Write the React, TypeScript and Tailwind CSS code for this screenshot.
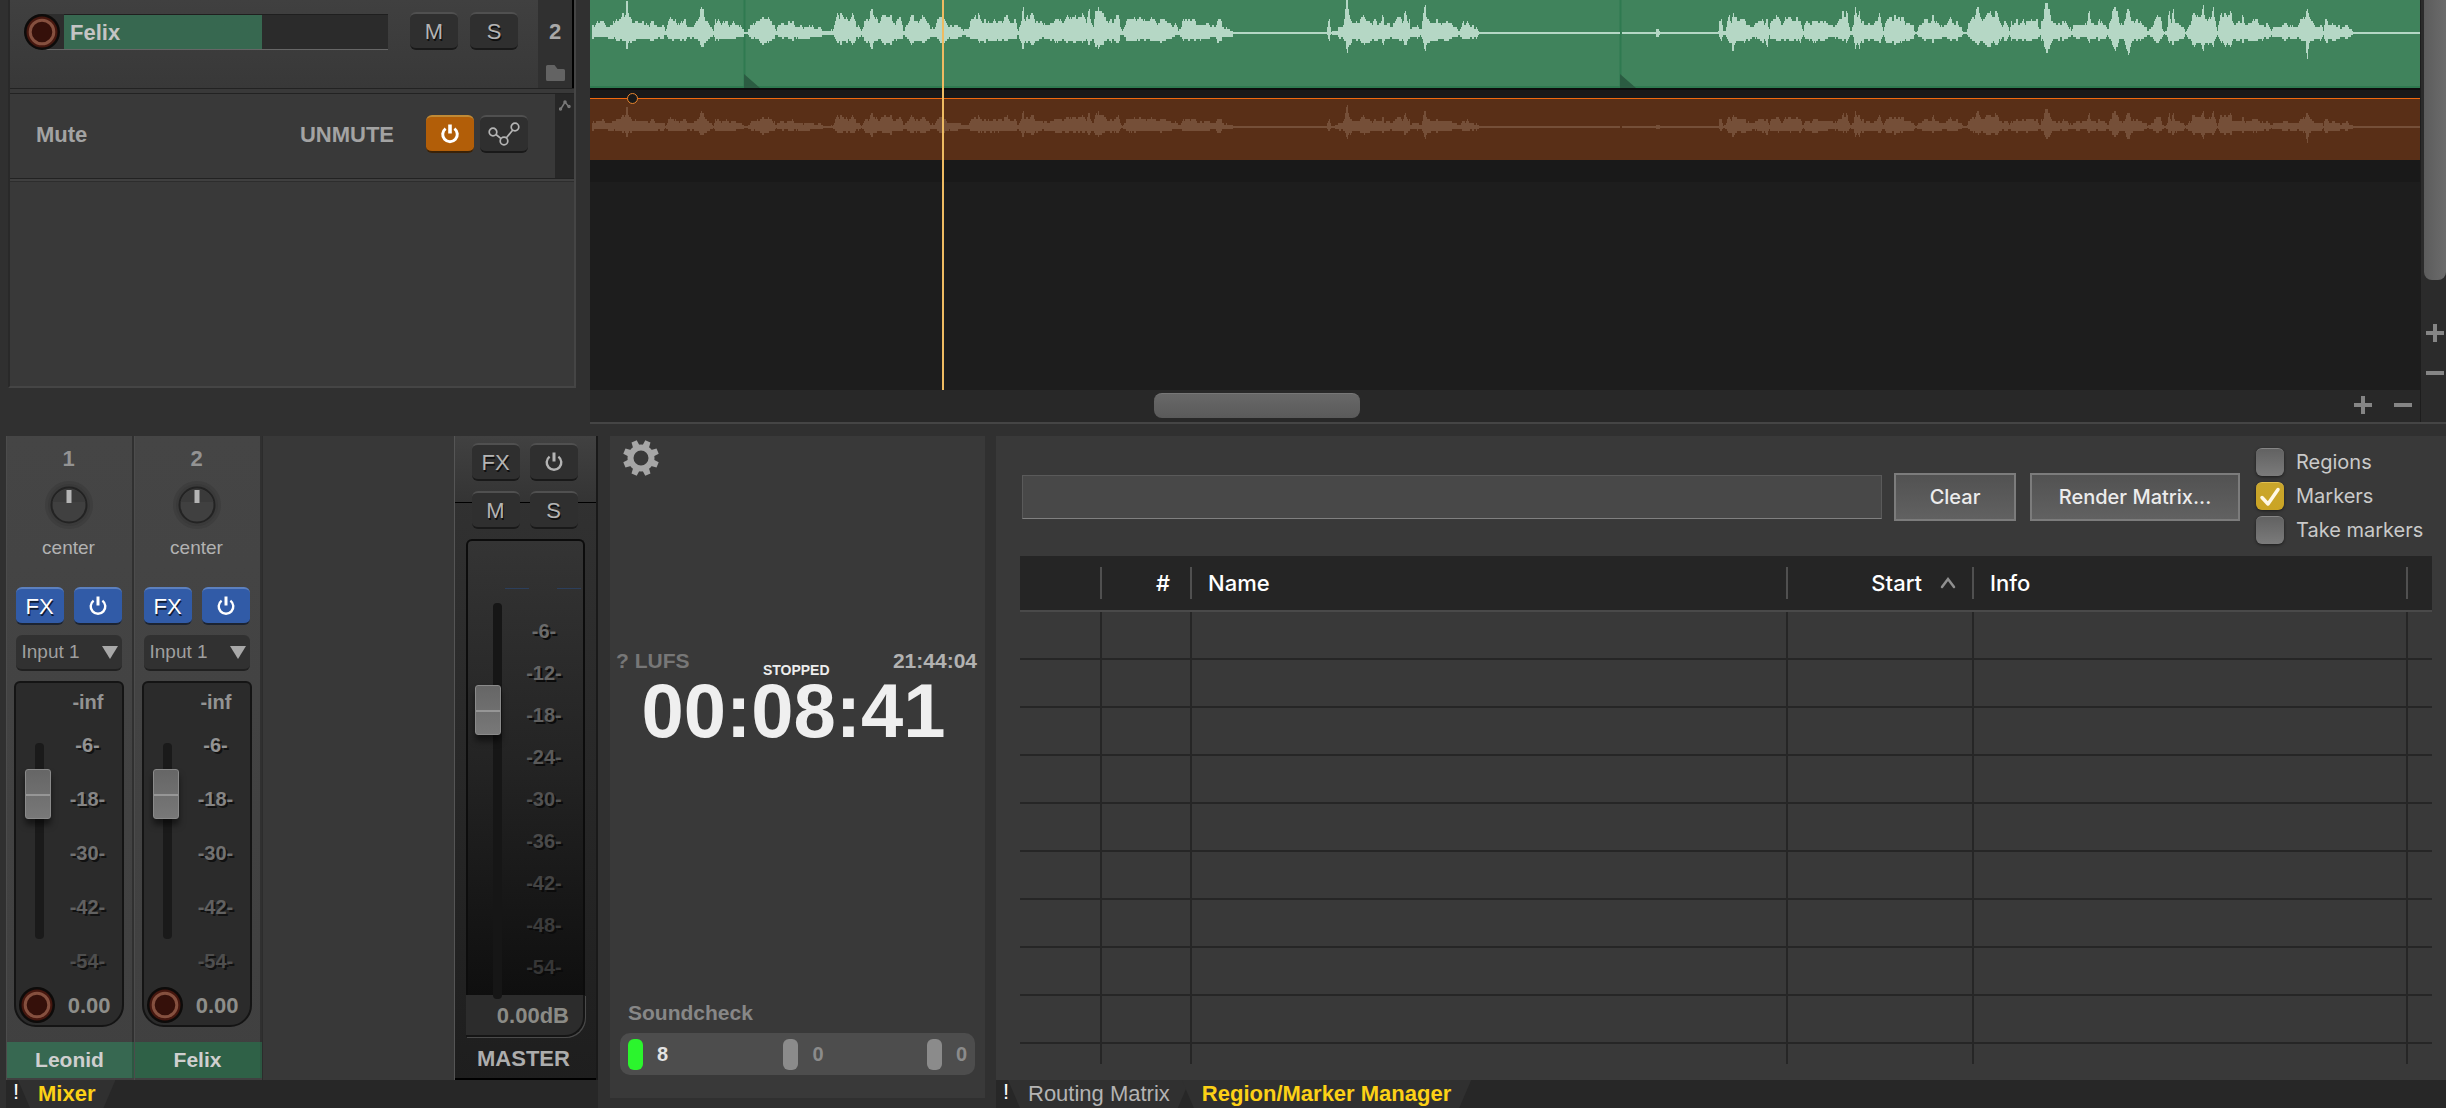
import type { ReactNode } from "react";

const sans = "font-['Liberation_Sans',Arial,sans-serif]";
const ui = "font-[Inter,'Noto_Sans',sans-serif]";

/* ---------- Waveform data: "position,top,bottom" breakpoints per passage ---------- */

type Passage = { start: number; scale: number; peaks: string };

const AXIS = 99;

const passages: Passage[] = [
  {
    start: -10,
    scale: 1.96,
    peaks:
      "24,80,112 35,66,112 48,66,112 50,80,114 62,80,114 68,60,116 72,72,118 80,55,118 88,48,122 91,0,150 95,45,125 103,75,120 108,66,118 130,66,118 135,80,114 142,66,118 150,80,115 163,80,112 167,96,102 171,72,115 177,54,118 182,72,116 186,60,116 194,80,116 205,54,122 210,80,115 222,80,115 230,62,118 240,24,142 244,55,130 250,66,122 258,84,110 261,96,102 264,66,118 270,50,125 276,72,118 287,60,118 292,78,118 300,66,118 315,80,112 320,84,110 321,97,101 328,96,102 330,84,110 345,62,118 358,54,136 364,54,128 370,66,118 380,72,116 383,96,102 388,80,110 396,74,112 410,66,118 425,78,116 440,85,115 455,80,112 472,84,110 476,95,102 490,96,102 492,84,102 494,96,102 497,84,108 500,70,112 503,24,138 508,45,130 515,45,125 524,66,120 533,48,128 540,72,118 548,84,110 551,95,103 556,72,118 565,60,128 570,24,150 575,60,122 588,66,116 592,54,125 612,55,128 618,70,118 625,54,116 630,72,115 634,96,102 640,72,115 652,48,130 660,66,122 670,54,125 678,66,120 685,80,115 695,90,108 700,60,112 704,54,124 714,54,128 718,80,115 745,80,112 750,92,106 760,84,110 768,55,116 778,48,118 785,66,122 798,62,122 805,72,122 810,54,125 816,72,120 825,66,118 838,54,118 843,68,116 853,66,116 858,96,102 862,72,125 868,36,138 873,60,125 880,54,125 887,42,135 893,70,122 905,66,116 915,80,116 928,68,118 935,54,128 945,68,120 955,50,128 962,62,118 971,48,128 984,50,122 992,72,116 997,24,138 1000,70,118 1006,80,118 1012,12,150 1017,50,130 1028,48,125 1035,66,120 1042,60,125 1050,60,120 1055,54,122 1059,85,105 1062,96,102 1070,66,118 1080,54,125 1090,58,122 1098,55,118 1108,68,118 1122,48,125 1130,72,122 1145,58,122 1155,72,118 1163,85,108 1166,72,108 1172,92,106 1178,80,110 1186,48,122 1192,66,118 1200,54,118 1210,80,118 1225,72,116 1235,80,112 1245,80,112 1249,60,130 1255,66,118 1262,85,112 1278,92,108 1279,97,101 1411,97,101",
  },
  {
    start: 710,
    scale: 2.613,
    peaks:
      "0,97,101 68,97,101 75,60,120 80,97,101 96,92,106 101,78,116 106,88,110 111,80,112 115,60,122 118,25,125 122,6,150 126,36,135 132,72,125 136,60,120 152,66,122 158,66,120 164,36,132 168,66,125 180,68,122 188,72,118 195,48,125 202,72,122 210,66,118 216,48,132 220,80,118 232,72,112 240,82,112 250,60,116 258,48,120 265,66,122 274,42,132 280,72,120 285,60,116 288,90,108 293,80,112 300,85,110 308,80,112 315,92,106 320,66,118 323,36,132 326,24,150 330,60,130 345,72,122 362,60,120 370,74,118 395,72,116 410,82,112 414,96,102 418,85,110 425,66,114 430,80,115 437,66,115 442,80,114 460,84,112 465,92,106 466,97,101 835,97,101 836,99,99 840,99,99 841,97,101 928,97,101 930,85,108 933,84,114 938,92,106 941,97,101 1092,97,101 1096,60,115 1100,54,125 1104,96,102 1112,90,106 1117,48,125 1121,42,130 1126,66,136 1131,54,143 1138,48,128 1145,66,120 1156,55,125 1165,72,120 1172,78,118 1183,84,112 1192,62,116 1205,60,122 1212,72,120 1220,60,137 1224,96,102 1228,72,112 1240,54,118 1250,58,120 1258,84,112 1268,60,118 1277,48,122 1284,62,120 1300,62,118 1306,60,130 1312,85,108 1314,96,102 1318,66,115 1335,74,120 1350,66,122 1375,68,118 1390,66,116 1395,80,112 1405,62,118 1415,50,118 1428,42,122 1433,80,112 1438,96,102 1445,80,110 1450,36,137 1455,66,120 1460,36,143 1465,66,125 1480,72,118 1500,74,120 1508,60,120 1513,36,132 1518,72,116 1522,84,110 1524,96,102 1530,66,125 1540,55,125 1555,54,130 1568,66,120",
  },
  {
    start: 1290,
    scale: 2.77,
    peaks:
      "55,60,130 63,48,122 68,74,118 92,80,115 95,97,101 102,97,101 103,84,110 115,72,115 130,60,118 138,68,118 147,54,122 155,66,118 165,82,112 175,80,112 192,60,118 200,72,118 212,68,118 225,84,110 228,97,101 240,97,101 243,66,110 250,66,116 255,55,122 262,54,125 268,12,135 274,48,125 282,72,116 290,55,128 301,30,150 306,55,125 315,60,120 323,24,143 328,66,118 336,80,114 345,68,118 355,84,112 358,96,102 362,72,118 375,66,120 388,72,118 397,60,120 405,70,120 420,66,118 435,66,116 440,85,110 442,96,102 446,66,118 452,50,130 457,18,145 463,26,150 468,26,150 473,60,130 478,72,118 500,74,116 513,66,118 520,80,116 528,84,110 530,96,102 534,80,112 550,78,112 572,70,114 578,24,130 583,70,116 600,74,114 612,60,120 620,74,118 628,85,110 630,96,102 634,66,118 645,40,130 652,36,143 658,36,138 663,72,120 676,66,122 684,36,150 690,48,148 695,72,122 705,66,118 714,60,120 725,72,118 737,84,110 740,97,101 746,88,108 755,72,116 768,48,130 775,48,120 783,92,106 786,97,101 794,92,105 796,60,120 800,30,132 806,66,125 811,42,130 818,72,120 830,80,114 842,84,112 845,97,101 850,88,108 858,72,120 866,36,137 872,60,125 880,46,130 888,50,130 894,18,155 899,54,130 908,66,125 915,60,124 922,36,132 928,60,120 932,90,106 934,96,102 938,54,118 945,50,124 955,42,136 962,50,130 970,48,130 978,66,122 990,68,122 998,66,122 1004,54,125 1012,72,118 1028,72,118 1038,54,125 1048,66,120 1060,80,116 1070,72,116 1080,84,112 1082,97,101 1088,80,112 1105,84,112 1125,72,118 1140,80,114 1155,84,112 1162,60,118 1172,54,125 1178,45,130 1182,24,180 1187,54,128 1195,66,120 1205,80,118 1218,80,116 1225,84,110 1227,96,102 1232,48,130 1238,66,125 1250,72,122 1265,80,116 1285,84,110 1289,76,114 1293,72,118 1300,84,110 1308,92,106 1309,97,101 1496,97,101",
  },
];

const points = passages.flatMap(({ start, scale, peaks }) =>
  peaks.split(" ").map((p) => {
    const [x, top, bottom] = p.split(",").map(Number);
    return { x: start + x / scale, up: (AXIS - top) / 3, down: (bottom - AXIS) / 3 };
  }),
);

/* Deterministic sample-to-sample variation, 0..1 */
function grain(n: number) {
  const s = Math.sin(n * 12.9898) * 43758.5453;
  return s - Math.floor(s);
}

function envelope(centre: number, gain: number) {
  const upper: string[] = [];
  const lower: string[] = [];
  let i = 0;
  for (let x = 2; x < 1830; x += 1) {
    while (i < points.length - 2 && points[i + 1].x <= x) i += 1;
    const a = points[i];
    const b = points[i + 1];
    const t = Math.min(1, Math.max(0, (x - a.x) / (b.x - a.x || 1)));
    const rough = 0.8 + 0.5 * grain(Math.floor(x / 2));
    const snap = (v: number) => (v < 0.2 ? 0 : Math.max(1, Math.round((v * gain * (v > 4 ? rough : 1)) / 2) * 2));
    const up = snap(a.up + (b.up - a.up) * t);
    const down = snap(a.down + (b.down - a.down) * t);
    upper.push(`${x} ${centre - up}L${x + 1} ${centre - up}`);
    lower.unshift(`${x + 1} ${centre + down}L${x} ${centre + down}`);
  }
  return `M${upper.join("L")}L${lower.join("L")}Z`;
}

const loudPath = envelope(33, 1);
const quietPath = envelope(28, 0.6);

/* ---------- Small parts ---------- */

function PowerIcon({ size = 22, bold = false }: { size?: number; bold?: boolean }) {
  return (
    <svg width={size} height={size} viewBox="0 0 22 22" fill="none" stroke="currentColor" strokeWidth={bold ? 3 : 2.4} aria-hidden="true">
      <path d="M6.6 5.6a7.3 7.3 0 1 0 8.8 0" />
      <path d="M11 1.5v9" strokeWidth={bold ? 3.6 : 3} />
    </svg>
  );
}

function RecordIcon({ size }: { size: number }) {
  return (
    <svg width={size} height={size} viewBox="0 0 36 36" aria-hidden="true">
      <circle cx="18" cy="18" r="18" fill="#0d0b0a" />
      <circle cx="18" cy="18" r="15.5" fill="#45170f" />
      <circle cx="18" cy="18" r="11.8" fill="#35100a" stroke="#85503f" strokeWidth="3" />
    </svg>
  );
}

function KeyButton({ label, children, tone = "dark", size = "w-12" }: { label: string; children: ReactNode; tone?: "dark" | "blue" | "orange"; size?: string }) {
  const tones = {
    dark: "bg-[#2f2f2f] border-t-[#505050] border-b-[#191919] text-[#b4b4b4]",
    blue: "bg-[#315ba7] border-t-[#5c80bf] border-b-[#1c2432] text-white",
    orange: "bg-[#b25e08] border-t-[#c08a35] border-b-[#3a2208] text-white",
  };
  return (
    <button
      type="button"
      aria-label={label}
      className={`flex h-[38px] shrink-0 items-center justify-center rounded-md border-t-2 border-b-2 text-[22px] [text-shadow:1px_2px_0_rgba(0,0,0,0.7)] ${size} ${tones[tone]}`}
    >
      {children}
    </button>
  );
}

function Knob({ label }: { label: string }) {
  return (
    <label className="relative flex h-12 w-12 items-center justify-center">
      <svg width="48" height="48" viewBox="0 0 48 48" aria-hidden="true">
        <circle cx="24" cy="24" r="24" fill="#3e3e3e" />
        <circle cx="24" cy="24" r="21" fill="#3a3a3a" />
        <circle cx="24" cy="24" r="17.5" fill="#404040" stroke="#232323" strokeWidth="2" />
        <path d="M7.5 21a17 17 0 0 1 33 0z" fill="#3a3a3a" />
        <rect x="21.500" y="9" width="5" height="13" fill="#b4b4b4" />
      </svg>
      <input type="range" min={-100} max={100} defaultValue={0} aria-label={label} className="absolute inset-0 h-full w-full opacity-0" />
    </label>
  );
}

function FaderCap() {
  return (
    <span className="block h-[50px] w-[26px] rounded-[3px] border border-[#8a8a8a] bg-linear-to-b from-[#666] to-[#787878] shadow-[0_6px_6px_rgba(0,0,0,0.5)]">
      <span className="mt-[24px] block h-0.5 bg-[#969696]" />
    </span>
  );
}

function Fader({ label, className, children }: { label: string; className: string; children: ReactNode }) {
  return (
    <label className={`relative block ${className}`}>
      {children}
      <input type="range" defaultValue={75} aria-label={label} className="absolute inset-0 h-full w-full opacity-0 [writing-mode:vertical-lr]" />
    </label>
  );
}

/* ---------- Track panel ---------- */

function TrackPanel() {
  return (
    <section aria-label="Track controls" className="w-[590px] shrink-0 pl-2">
      <div className="h-[388px] w-[568px] border-x-2 border-b-2 border-[#454545] border-l-[#292929] bg-[#393939]">
        <div className="flex h-[89px] border-b border-[#222] bg-linear-to-b from-[#404040] to-[#383838]">
          <div className="flex flex-1 items-start pt-3 pl-[14px]">
            <div className="mt-0.5 flex h-9 w-[364px] rounded-l-full border-b border-[#666] bg-[#2d2d2d]">
              <button type="button" aria-label="Record arm Felix">
                <RecordIcon size={36} />
              </button>
              <input
                aria-label="Track name"
                defaultValue="Felix"
                className="ml-1 w-full min-w-0 border-t border-[#1f1f1f] bg-linear-to-r from-[#376850] from-61% to-[#2b2b2b] to-61% pl-[6px] text-[22px] font-bold text-[#c4c4c4] outline-none"
              />
            </div>
            <div className="ml-[22px] flex gap-3">
              <KeyButton label="Mute">M</KeyButton>
              <KeyButton label="Solo">S</KeyButton>
            </div>
          </div>
          <div className="flex w-9 flex-col items-center border-r-2 border-black bg-[#303030] pt-5 text-[22px] leading-6 font-bold text-[#a8a8a8]">
            2
            <svg width="19" height="16" viewBox="0 0 19 16" className="mt-[21px]" aria-hidden="true">
              <path d="M0 1.500q0-1.500 1.500-1.500h7l3 4h6q1.500 0 1.500 1.500v9q0 1.500-1.500 1.500h-16q-1.500 0-1.500-1.500z" fill="#636363" />
            </svg>
          </div>
        </div>
        <div className="mt-1 flex h-[86px] border-y border-[#222]">
          <div className="flex flex-1 items-center pb-1 pl-[26px] text-[22px] font-bold text-[#a3a3a3]">
            <span>Mute</span>
            <span className="ml-auto">UNMUTE</span>
            <div className="mr-[27px] ml-8 flex gap-1.5">
              <KeyButton label="Bypass envelope" tone="orange">
                <PowerIcon size={22} bold />
              </KeyButton>
              <KeyButton label="Envelope options">
                <svg width="32" height="24" viewBox="0 0 32 24" fill="none" stroke="currentColor" strokeWidth="1.700" aria-hidden="true">
                  <circle cx="5" cy="10" r="3.800" />
                  <circle cx="16" cy="19" r="3.800" />
                  <circle cx="27" cy="5" r="3.800" />
                  <path d="M8 12.500l5 4.200M18.200 16l6.600-8" />
                </svg>
              </KeyButton>
            </div>
          </div>
          <div className="w-[19px] bg-[#272727] pt-1.5 pl-1">
            <svg width="12" height="11" viewBox="0 0 12 11" fill="none" stroke="#7a7a7a" strokeWidth="1.500" aria-hidden="true">
              <path d="M1.500 9.500L6 2l4 5" />
              <circle cx="1.500" cy="9" r="1" />
              <circle cx="6" cy="2" r="1" />
              <circle cx="10" cy="6.500" r="1" />
            </svg>
          </div>
        </div>
        <div className="h-[3px] border-b border-[#2d2d2d] bg-[#404040]" />
      </div>
    </section>
  );
}

/* ---------- Arrange view ---------- */

function ZoomButton({ kind, label }: { kind: "plus" | "minus"; label: string }) {
  return (
    <button type="button" aria-label={label} className="text-[#858585]">
      <svg width="20" height="20" viewBox="0 0 20 20" stroke="currentColor" strokeWidth="4" aria-hidden="true">
        <path d={kind === "plus" ? "M1 10h18M10 1v18" : "M1 10h18"} />
      </svg>
    </button>
  );
}

function Arrange() {
  return (
    <section aria-label="Arrange view" className="flex min-w-0 flex-1 border-b-2 border-[#454545]">
      <div className="flex min-w-0 flex-1 flex-col">
        <div className="relative h-[390px] overflow-hidden bg-[#1d1d1d]">
          <div className="h-[88px] border-b-2 border-[#2f7a50] bg-[#40835c]">
            <svg className="h-[88px] w-full" viewBox="0 0 1830 88" preserveAspectRatio="none" aria-label="Felix audio">
              <path d="M154.500 0v88M1030.500 0v88" stroke="#2f7a50" strokeWidth="2" />
              <path d={loudPath} fill="#b5d7c5" />
              <path d="M154 74l16 14h-16zM1030 74l16 14h-16z" fill="#2b5c42" />
            </svg>
          </div>
          <div className="h-[10px] border-t-2 border-[#0d0d0d] bg-[#191919]" />
          <div className="h-[62px] border-t border-[#f0690f] bg-[#592f17]">
            <svg className="h-[61px] w-full" viewBox="0 0 1830 61" preserveAspectRatio="none" aria-label="Felix mute envelope">
              <path d={quietPath} fill="#754f38" />
            </svg>
          </div>
          <div className="h-[22px] bg-[#191919]" />
          <span className="absolute top-[93px] left-[37px] h-[11px] w-[11px] rounded-full border border-[#e8862f] bg-[#191919]" />
          <span className="absolute inset-y-0 left-[352px] w-[2px] bg-[#eebb62]" />
        </div>
        <div className="flex h-8 items-center bg-[#282828] pr-[7px] pb-0.5">
          <div className="flex-1">
            <div className="ml-[32%] h-[25px] w-[206px] rounded-lg border-t border-[#777] bg-linear-to-b from-[#686868] to-[#5a5a5a]" />
          </div>
          <div className="flex gap-5">
            <ZoomButton kind="plus" label="Zoom in horizontally" />
            <ZoomButton kind="minus" label="Zoom out horizontally" />
          </div>
        </div>
      </div>
      <div className="flex w-[26px] flex-col items-end border-l border-[#1d1d1d] bg-[#2b2b2b]">
        <div className="h-[280px] w-[22px] rounded-b-lg bg-linear-to-r from-[#5c5c5c] to-[#6b6b6b]" />
        <div className="mt-[43px] flex flex-col gap-5 pr-px">
          <ZoomButton kind="plus" label="Zoom in vertically" />
          <ZoomButton kind="minus" label="Zoom out vertically" />
        </div>
      </div>
    </section>
  );
}

/* ---------- Mixer ---------- */

const stripMarks = [
  { db: "-6-", tone: "text-[#939393]" },
  { db: "-18-", tone: "text-[#858585]" },
  { db: "-30-", tone: "text-[#727272]" },
  { db: "-42-", tone: "text-[#616161]" },
  { db: "-54-", tone: "text-[#4f4f4f]" },
];

function ChannelStrip({ number, name, bar }: { number: number; name: string; bar: string }) {
  return (
    <div className="flex w-32 flex-col border-l border-l-[#4c4c4c] bg-linear-to-b from-[#454545] to-[#404040]">
      <div className="flex h-[606px] flex-col items-center border-r-2 border-[#303030] pt-[11px] pr-0.5">
        <span className="text-[22px] leading-6 font-bold text-[#939393]">{number}</span>
        <div className="mt-[10px]">
          <Knob label={`Pan ${name}`} />
        </div>
        <span className="mt-[7px] text-[19px] leading-6 text-[#b2b2b2]">center</span>
        <div className="mt-[27px] flex gap-2.5">
          <KeyButton label={`Effects ${name}`} tone="blue">FX</KeyButton>
          <KeyButton label={`Effects power ${name}`} tone="blue">
            <PowerIcon />
          </KeyButton>
        </div>
        <div className="relative mt-[10px]">
          <select
            aria-label={`Input of ${name}`}
            className="h-9 w-[106px] appearance-none rounded-md border-b-2 border-[#202020] bg-[#313131] pl-1.5 text-[19px] text-[#9f9f9f]"
          >
            <option>Input 1</option>
          </select>
          <svg width="16" height="13" viewBox="0 0 16 13" className="pointer-events-none absolute top-[11px] right-1" aria-hidden="true">
            <path d="M0 0h16l-8 13z" fill="#a8a8a8" />
          </svg>
        </div>
        <div className="mt-[10px] flex h-[346px] w-[110px] flex-col rounded-t-md rounded-b-[22px] border-2 border-[#141414] bg-[#2b2b2b]">
          <div className="mt-[7px] pr-[18px] text-right text-xl leading-6 font-bold text-[#939393]">-inf</div>
          <div className="mt-0.5 flex h-[269px] justify-between">
            <Fader label={`Volume ${name}`} className="ml-[9px] h-full w-[26px]">
              <span className="absolute top-[27px] left-2.5 h-[196px] w-[9px] rounded-sm bg-[#1a1a1a]" />
              <span className="absolute top-[53px] left-0">
                <FaderCap />
              </span>
            </Fader>
            <ul className="mt-0.5 w-[68px] text-center text-xl font-bold">
              {stripMarks.map((m) => (
                <li key={m.db} className={`h-[54px] leading-[54px] [text-shadow:2px_2px_0_#111] ${m.tone}`}>
                  {m.db}
                </li>
              ))}
            </ul>
          </div>
          <div className="mt-0.5 flex items-center justify-between pr-[11px] pl-[3px]">
            <button type="button" aria-label={`Record arm ${name}`}>
              <RecordIcon size={36} />
            </button>
            <span className="text-[22px] font-bold text-[#8e8e8a]">0.00</span>
          </div>
        </div>
      </div>
      <div className={`flex h-9 items-center justify-center border-r-2 border-[#2c5842] text-[21px] font-bold text-[#cfcfcf] ${bar}`}>{name}</div>
      <div className="h-0.5" />
    </div>
  );
}

const masterMarks = [
  { db: "-6-", tone: "text-[#6b6b6b]" },
  { db: "-12-", tone: "text-[#666]" },
  { db: "-18-", tone: "text-[#606060]" },
  { db: "-24-", tone: "text-[#5a5a5a]" },
  { db: "-30-", tone: "text-[#525252]" },
  { db: "-36-", tone: "text-[#4a4a4a]" },
  { db: "-42-", tone: "text-[#444]" },
  { db: "-48-", tone: "text-[#3c3c3c]" },
  { db: "-54-", tone: "text-[#363636]" },
];

function MasterStrip() {
  return (
    <div className="relative flex w-[144px] flex-col border-r-2 border-l border-r-[#191919] border-l-[#555] bg-linear-to-b from-[#333] to-[#1e1e1e]">
      <div className="flex h-[67px] justify-center gap-2.5 border-b border-black bg-linear-to-b from-[#414141] to-[#343434] pt-[7px] pr-0.5">
        <KeyButton label="Master effects">FX</KeyButton>
        <KeyButton label="Master effects power">
          <PowerIcon />
        </KeyButton>
      </div>
      <div className="-mt-3 flex justify-center gap-2.5 pr-0.5">
        <KeyButton label="Master mute">M</KeyButton>
        <KeyButton label="Master solo">S</KeyButton>
      </div>
      <div className="mx-[11px] mt-[10px] flex h-[456px] justify-between rounded-t-md border-2 border-b-0 border-[#0c0c0c] bg-linear-to-b from-[#343434] via-[#232323] via-50% to-[#0f0f0f]">
        <Fader label="Master volume" className="ml-[7px] h-full w-7">
          <span className="absolute top-[62px] left-[18px] h-[396px] w-[9px] rounded-sm bg-[#161616]" />
          <span className="absolute top-[144px] left-0">
            <FaderCap />
          </span>
        </Fader>
        <div className="w-[78px]">
          <div className="mt-[47px] flex justify-between pr-0.5">
            <span className="h-px w-6 bg-[#2c3f5c]" />
            <span className="h-px w-6 bg-[#2c3f5c]" />
          </div>
          <ul className="mt-[21px] text-center text-xl font-bold">
            {masterMarks.map((m) => (
              <li key={m.db} className={`h-[42px] leading-[42px] [text-shadow:2px_2px_0_#0b0b0b] ${m.tone}`}>
                {m.db}
              </li>
            ))}
          </ul>
        </div>
      </div>
      <div className="mx-[11px] flex h-[42px] items-center justify-end rounded-br-[20px] border-r-2 border-b-2 border-[#151515] bg-[#2c2c2c] pr-[14px] text-[22px] font-bold text-[#8b8b86] shadow-[1px_1px_0_#4a4a4a]">
        0.00dB
      </div>
      <div className="mt-[3px] flex flex-1 items-center justify-center border-b-2 border-black pr-1 pb-0.5 text-[22px] font-bold text-[#adadad]">MASTER</div>
    </div>
  );
}

function Tab({ children, active = false }: { children: ReactNode; active?: boolean }) {
  return (
    <button
      type="button"
      role="tab"
      aria-selected={active}
      className={`h-7 bg-[#303030] px-5 text-[22px] leading-7 [clip-path:polygon(0_0,100%_0,calc(100%-12px)_100%,12px_100%)] ${active ? "font-bold text-[#fcd116]" : "text-[#b4b4b4]"}`}
    >
      {children}
    </button>
  );
}

function TabBar({ label, children }: { label: string; children: ReactNode }) {
  return (
    <div role="tablist" aria-label={label} className="flex h-7 bg-[#272727]">
      <span className="w-3 pl-[7px] text-[22px] leading-6 text-white">!</span>
      {children}
    </div>
  );
}

function Mixer() {
  return (
    <section aria-label="Mixer" className="ml-1.5 w-[592px] shrink-0">
      <div className="flex h-[644px] bg-[#383838]">
        <ChannelStrip number={1} name="Leonid" bar="bg-[#376851]" />
        <ChannelStrip number={2} name="Felix" bar="bg-[#2f6147]" />
        <div className="flex-1 border-l border-[#2c2c2c]" />
        <MasterStrip />
      </div>
      <TabBar label="Mixer docker">
        <Tab active>Mixer</Tab>
      </TabBar>
    </section>
  );
}

/* ---------- Clock ---------- */

function Gear() {
  const teeth = Array.from({ length: 8 }, (_, i) => i * 45 + 22.5);
  return (
    <svg width="36" height="36" viewBox="0 0 36 36" aria-hidden="true">
      <circle cx="18" cy="18" r="10.500" fill="none" stroke="#a6a6a6" strokeWidth="6" />
      {teeth.map((a) => (
        <path key={a} d="M14.500 6.500L15.200 0h5.600L21.500 6.500z" fill="#a6a6a6" transform={`rotate(${a} 18 18)`} />
      ))}
    </svg>
  );
}

function Led({ tone, value, valueTone }: { tone: string; value: number; valueTone: string }) {
  return (
    <span className="flex items-center gap-3.5">
      <span className={`h-[31px] w-[15px] rounded-md ${tone}`} />
      <span className={`text-xl font-bold ${valueTone}`}>{value}</span>
    </span>
  );
}

function Clock() {
  return (
    <section aria-label="Clock" className="ml-3 flex h-[662px] w-[375px] shrink-0 flex-col bg-[#393939]">
      <button type="button" aria-label="Clock settings" className="mt-1 ml-[13px] self-start">
        <Gear />
      </button>
      <div className="mt-[172px] flex h-[26px] items-start justify-between pr-2 pl-1.5 text-[21px] leading-[26px] font-bold">
        <span className="text-[#777]">? LUFS</span>
        <span className="pt-[14px] pl-[10px] text-sm leading-4 text-[#ededed]">STOPPED</span>
        <span className="text-[#b2b2b2]">21:44:04</span>
      </div>
      <div className="mt-1 pr-2 text-center text-[76px] leading-[66px] font-bold text-[#efefef]">00:08:41</div>
      <div className="mt-auto pl-[18px] text-[21px] leading-6 font-bold text-[#878787]">Soundcheck</div>
      <div className="mx-[10px] mt-2 mb-[23px] flex h-[42px] items-center justify-between rounded-[10px] bg-[#4d4d4d] px-2">
        <Led tone="bg-[#2bf52d]" value={8} valueTone="text-[#e2e2e2]" />
        <span className="pl-3">
          <Led tone="bg-[#8b8b8b]" value={0} valueTone="text-[#8b8b8b]" />
        </span>
        <Led tone="bg-[#8b8b8b]" value={0} valueTone="text-[#8b8b8b]" />
      </div>
    </section>
  );
}

/* ---------- Region / marker manager ---------- */

function Check({ label, checked = false }: { label: string; checked?: boolean }) {
  return (
    <label className="flex h-[34px] items-center gap-3 text-xl text-[#c9c9c9]">
      <span className="relative h-7 w-7">
        <input
          type="checkbox"
          defaultChecked={checked}
          className="peer block h-7 w-7 appearance-none rounded-md border-t border-[#858585] bg-linear-to-b from-[#626262] to-[#7b7b7b] shadow-[0_1px_3px_rgba(0,0,0,0.5)] checked:border-[#e2c050] checked:from-[#c9a62c] checked:to-[#cba424]"
        />
        <svg viewBox="0 0 28 28" className="pointer-events-none absolute inset-0 hidden h-7 w-7 peer-checked:block" fill="none" stroke="#fff8e6" strokeWidth="3.500" strokeLinecap="round" strokeLinejoin="round" aria-hidden="true">
          <path d="M6 15.500l6 6.500L22 7.500" />
        </svg>
      </span>
      {label}
    </label>
  );
}

const pushButton = "h-12 border-2 border-[#7c7c7c] bg-linear-to-b from-[#525252] to-[#616161] text-xl font-medium text-[#ececec]";

function HeadCell({ children, align = "text-left", rule = true }: { children?: ReactNode; align?: string; rule?: boolean }) {
  return (
    <th scope="col" className={`h-14 border-b-2 border-[#4a4a4a] p-0 text-[22px] font-medium text-white ${align}`}>
      <div className={`h-8 leading-8 ${rule ? "border-r-2 border-[#505050]" : ""}`}>{children}</div>
    </th>
  );
}

function Manager() {
  const rows = Array.from({ length: 10 }, (_, i) => i);
  return (
    <section aria-label="Region and marker manager" className="ml-[11px] min-w-0 flex-1">
      <div className={`h-[644px] bg-[#393939] pr-[14px] pl-6 ${ui}`}>
        <div className="flex h-[120px] items-center pt-[2px]">
          <input
            type="text"
            aria-label="Filter"
            className="ml-0.5 h-11 min-w-0 flex-1 border border-[#5a5a5a] border-b-[#808080] bg-[#484848] px-2 text-xl text-white outline-none"
          />
          <button type="button" className={`ml-3 w-[122px] ${pushButton}`}>Clear</button>
          <button type="button" className={`ml-3.5 w-[210px] ${pushButton}`}>Render Matrix...</button>
          <div className="ml-4 w-[176px] pb-0.5">
            <Check label="Regions" />
            <Check label="Markers" checked />
            <Check label="Take markers" />
          </div>
        </div>
        <table className="w-full table-fixed border-separate border-spacing-0">
          <colgroup>
            <col className="w-[82px]" />
            <col className="w-[90px]" />
            <col />
            <col className="w-[186px]" />
            <col className="w-[434px]" />
            <col className="w-[24px]" />
          </colgroup>
          <thead className="bg-[#252525]">
            <tr>
              <HeadCell />
              <HeadCell align="text-right">
                <span className="pr-5">#</span>
              </HeadCell>
              <HeadCell>
                <span className="pl-4">Name</span>
              </HeadCell>
              <HeadCell align="text-right">
                <span className="inline-flex items-center gap-[18px] pr-4">
                  Start
                  <svg width="16" height="14" viewBox="0 0 16 14" fill="none" stroke="#8f8f8f" strokeWidth="2.500" strokeLinecap="round" aria-hidden="true">
                    <path d="M2 11l6-8 6 8" />
                  </svg>
                </span>
              </HeadCell>
              <HeadCell>
                <span className="pl-4">Info</span>
              </HeadCell>
              <HeadCell rule={false} />
            </tr>
          </thead>
          <tbody>
            {rows.map((r) => {
              const last = r === rows.length - 1;
              const cell = last ? "h-5 p-0" : "h-12 border-b-2 border-[#262626] p-0";
              return (
                <tr key={r}>
                  <td className={`${cell} border-r-2 border-[#262626]`} />
                  <td className={`${cell} border-r-2 border-[#262626]`} />
                  <td className={`${cell} border-r-2 border-[#262626]`} />
                  <td className={`${cell} border-r-2 border-[#262626]`} />
                  <td className={`${cell} border-r-2 border-[#262626]`} />
                  <td className={cell} />
                </tr>
              );
            })}
          </tbody>
        </table>
      </div>
      <TabBar label="Manager docker">
        <Tab>Routing Matrix</Tab>
        <span className="-ml-2">
          <Tab active>Region/Marker Manager</Tab>
        </span>
      </TabBar>
    </section>
  );
}

export default function App() {
  return (
    <main className={`min-h-screen overflow-hidden bg-[#303030] ${sans}`}>
      <div className="flex">
        <TrackPanel />
        <Arrange />
      </div>
      <div className="mt-3 flex items-start">
        <Mixer />
        <Clock />
        <Manager />
      </div>
    </main>
  );
}
